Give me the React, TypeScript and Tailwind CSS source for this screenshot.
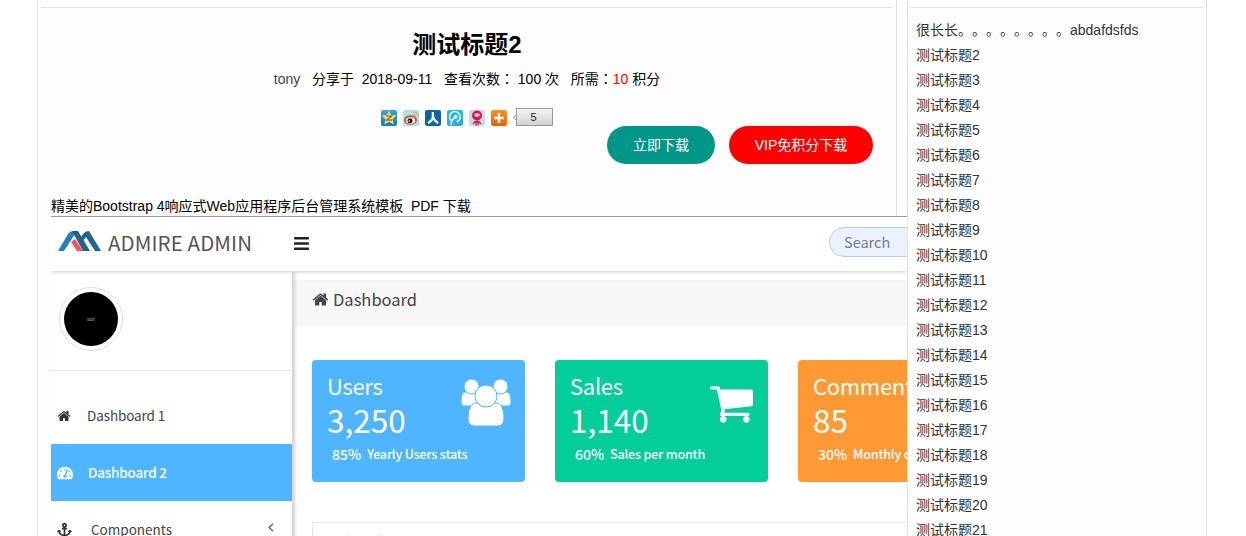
import clsx from "clsx";
import React from "react";
import { FaAnchor, FaBars, FaTachometerAlt } from "react-icons/fa";

const titles = [
  "很长长。。。。。。。。abdafdsfds",
  ...Array.from({ length: 20 }, (_, i) => `测试标题${i + 2}`),
];

const stats = [
  {
    name: "Users",
    count: "3,250",
    percent: "85%",
    note: "Yearly Users stats",
    color: "bg-[#4fb5fe]",
    icon: <UsersIcon />,
  },
  {
    name: "Sales",
    count: "1,140",
    percent: "60%",
    note: "Sales per month",
    color: "bg-[#03cd98]",
    icon: <CartIcon />,
  },
  {
    name: "Comments",
    count: "85",
    percent: "30%",
    note: "Monthly comments",
    color: "bg-[#ff9933]",
    icon: null,
  },
];

function HomeIcon({ className }: { className?: string }) {
  return (
    <svg viewBox="0 0 1792 1792" fill="currentColor" className={className}>
      <path d="M1472 992v480q0 26-19 45t-45 19h-384v-384h-256v384h-384q-26 0-45-19t-19-45v-480q0-1 .5-3t.5-3l575-474 575 474q1 2 1 6zm223-69l-62 74q-8 9-21 11h-3q-13 0-21-7l-692-577-692 577q-12 8-24 7-13-2-21-11l-62-74q-8-10-7-23.5t11-21.5l719-599q32-26 76-26t76 26l244 204v-195q0-14 9-23t23-9h192q14 0 23 9t9 23v408l219 182q10 8 11 21.5t-7 23.5z" />
    </svg>
  );
}

function UsersIcon() {
  return (
    <svg
      viewBox="0 0 50 48"
      fill="#fff"
      stroke="#4fb5fe"
      className="mt-[19px] mr-[14px] h-[48px] w-[50px] shrink-0"
    >
      <path d="M4 13h10c3 0 5 3 5 6v8H4c-3 0-4-1-4-4 0-5 1-10 4-10z" />
      <path d="M36 13h10c3 0 4 5 4 10 0 3-1 4-4 4H31v-8c0-3 2-6 5-6z" />
      <circle cx="10.500" cy="7.500" r="7.500" />
      <circle cx="39.500" cy="7.500" r="7.500" />
      <path d="M15 24h20c6 0 8 8 8 15 0 6-3 8-7 8H14c-4 0-7-2-7-8 0-7 2-15 8-15z" />
      <circle cx="25" cy="17" r="11" />
    </svg>
  );
}

function CartIcon() {
  return (
    <svg
      viewBox="64 256 1664 1408"
      fill="#fff"
      className="mt-[26px] mr-[15px] h-[37px] w-[43px] shrink-0"
    >
      <path d="M704 1536q0 52-38 90t-90 38-90-38-38-90 38-90 90-38 90 38 38 90zm896 0q0 52-38 90t-90 38-90-38-38-90 38-90 90-38 90 38 38 90zm128-1088v512q0 24-16.500 42.500t-40.500 21.500l-1044 122q13 60 13 70 0 16-24 64h920q26 0 45 19t19 45-19 45-45 19h-1024q-26 0-45-19t-19-45q0-11 8-31.500t16-36 21.500-40 15.500-29.500l-177-823h-204q-26 0-45-19t-19-45 19-45 45-19h256q16 0 28.500 6.500t19.500 15.500 13 24.500 8 26 5.500 29.500 4.500 26h1201q26 0 45 19t19 45z" />
    </svg>
  );
}

function Colon() {
  return <span className="font-['Noto_Sans_CJK_JP',sans-serif] leading-none">：</span>;
}

function ShareBar() {
  return (
    <div className="flex h-[18px] items-center">
      <svg width="137" height="18" viewBox="0 0 137 18" className="shrink-0">
        <defs>
          <linearGradient id="qzone" x2="0" y2="1">
            <stop stopColor="#38a6ee" />
            <stop offset="1" stopColor="#087bd0" />
          </linearGradient>
          <linearGradient id="tencent" x2="0" y2="1">
            <stop stopColor="#20bde0" />
            <stop offset="1" stopColor="#35a9d4" />
          </linearGradient>
          <linearGradient id="more" x2="0" y2="1">
            <stop stopColor="#ff9124" />
            <stop offset="1" stopColor="#f95b00" />
          </linearGradient>
        </defs>
        {/* qzone */}
        <rect y="2" width="16" height="16" rx="2" fill="url(#qzone)" />
        <path d="M8 2.500l2 4.500 5.500 .6-4 3.600 1.200 5.300-4.700-2.800L3.300 16.500l1.200-5.300L.5 7.600 6 7z" fill="#ffd95a" />
        <path d="M5.500 8.200h5l-4.800 4h5.300" fill="none" stroke="#9b6a12" strokeWidth="1.200" />
        {/* weibo */}
        <rect x="22" y="2" width="16" height="16" rx="2" fill="#a9e2ec" />
        <ellipse cx="29.500" cy="12" rx="6.500" ry="4.800" fill="#e6472c" />
        <ellipse cx="29.500" cy="12.500" rx="4.600" ry="3.200" fill="#fff" />
        <circle cx="29" cy="12.700" r="2.500" fill="#1c1c1c" />
        <circle cx="28.300" cy="13" r=".8" fill="#fff" />
        <path d="M31.500 7q3-.6 3 2.200M32 4.300q5.300-.8 5 4.700" fill="none" stroke="#e9b63c" strokeWidth="1.300" />
        {/* renren */}
        <rect x="44" y="2" width="16" height="16" rx="2" fill="#0e63a6" />
        <path d="M51.800 4v4.500q0 4-4.800 6.500M52.200 8.500q.5 4 5 6.500" fill="none" stroke="#fff" strokeWidth="2.200" />
        {/* tencent weibo */}
        <rect x="66" y="2" width="16" height="16" rx="2" fill="url(#tencent)" />
        <path d="M71.300 13.500a5.300 5.300 0 1 1 4.500.3M74.700 9Q70.500 11 70 17" fill="none" stroke="#e4f8fd" strokeWidth="1.500" />
        <circle cx="74.700" cy="8.700" r="1.800" fill="#fff" />
        {/* netease */}
        <rect x="88" y="2" width="16" height="16" rx="2" fill="#c7dceb" />
        <circle cx="96" cy="7.500" r="5" fill="#df1748" />
        <path d="M93 6.500q3-2.500 6 0-.5 2.500-3 2.500t-3-2.500z" fill="#f8d2dc" />
        <path d="M96 12v3M92 16l2-2.300h4l2 2.300M95 13.500v4M97 13.500v4" fill="none" stroke="#df1748" strokeWidth="1.300" />
        {/* more */}
        <rect x="110" y="2" width="16" height="16" rx="2" fill="url(#more)" />
        <path d="M118 5v10M113 10h10" stroke="#fff" strokeWidth="2.400" />
        {/* counter arrow */}
        <path d="M137 5l-4.300 4.500L137 14" fill="#eee" stroke="#999" />
      </svg>
      <span className="-ml-[2px] h-[18px] w-[37px] border border-[#999] bg-linear-to-b from-[#f5f5f5] to-[#d2d2d2] pr-[2px] text-center text-[11px] leading-4 text-[#222]">
        5
      </span>
    </div>
  );
}

function Sidebar() {
  return (
    <aside className="z-10 h-[280px] w-[241px] shrink-0 bg-white text-[13.5px] text-[#444] shadow-[3px_0_3px_#d4d4d4]">
      <div className="h-[100px] border-b border-[#e5e5e5] pt-[16px] pl-[8px]">
        <div className="flex size-[64px] items-center justify-center rounded-full border border-[#ddd]">
          <div className="flex size-[54px] items-center justify-center rounded-full bg-black text-[4px] text-[#bbb]">
            Bob
          </div>
        </div>
      </div>
      <div className="mt-[16px] flex h-[57px] items-center pl-[6px]">
        <HomeIcon className="mr-[16px] size-[14px] text-[#333]" />
        <span className="tracking-[-0.1px]">Dashboard 1</span>
      </div>
      <div className="flex h-[57px] items-center bg-[#4fb5fe] pl-[6px] font-medium text-white">
        <FaTachometerAlt className="mr-[15px] size-[16px]" />
        <span className="tracking-[-0.2px]">Dashboard 2</span>
      </div>
      <div className="flex h-[57px] items-center pl-[6px]">
        <FaAnchor className="mr-[19px] size-[15px] text-[#333]" />
        Components
        <svg viewBox="0 0 6 9" className="mt-[-5px] mr-[18px] ml-auto h-[9px] w-[6px]">
          <path d="M5 .8L1.200 4.500 5 8.200" fill="none" stroke="#666" strokeWidth="1.400" />
        </svg>
      </div>
    </aside>
  );
}

function Preview() {
  return (
    <div className="h-[330px] w-[856px] overflow-hidden border-t border-[#9b9b9b] bg-white font-['Noto_Sans_CJK_SC',sans-serif]">
      <div className="relative z-20 flex h-[54px] items-center bg-white shadow-[0_1px_4px_#ccc]">
        <svg viewBox="0 0 43 20" className="mt-[-6px] ml-[7px] h-[20px] w-[43px] shrink-0">
          <path d="M0 20L10 3q2-3 6-3h3L6 20z" fill="#2083b8" />
          <path d="M14 0h6l12 20h-7z" fill="#285f8c" />
          <path d="M13 11l4-3 8 12h-6z" fill="#f35656" />
          <path d="M22 7l4-5q2-2 5-2l12 20h-6L28 6l-4 5z" fill="#1d6594" />
        </svg>
        <span className="mt-[-4px] ml-[7px] w-[146px] shrink-0 text-[20.5px] tracking-[0.1px] whitespace-nowrap text-[#555]">
          ADMIRE ADMIN
        </span>
        <FaBars className="mt-[-2px] ml-[39px] size-[17px] shrink-0 text-[#222]" />
        <div className="mt-[-4px] ml-[519px] flex h-[30px] w-[160px] shrink-0 items-center rounded-full border border-[#b4cfe2] bg-[#e9f2fe] pl-[14px] text-[14.5px] text-[#777f89]">
          Search
        </div>
      </div>
      <div className="flex">
        <Sidebar />
        <main className="w-[615px] shrink-0 pt-[9px]">
          <div className="flex h-[45px] items-center border-y border-[#f3f3f3] bg-[#f7f7f7] pb-[6px] pl-[20px] text-[16.5px] text-[#444]">
            <HomeIcon className="mr-[4px] size-[17px]" />
            Dashboard
          </div>
          <div className="mt-[35px] flex gap-[30px] pl-[20px]">
            {stats.map((stat) => (
              <div
                key={stat.name}
                className={clsx(
                  "flex h-[122px] w-[213px] shrink-0 justify-between rounded text-white",
                  stat.color,
                )}
              >
                <div className="min-w-0 pl-[15px] whitespace-nowrap">
                  <p className="mt-[11px] text-[22px] leading-[28px] tracking-[-0.3px]">
                    {stat.name}
                  </p>
                  <p className="text-[31.5px] leading-[40px]">{stat.count}</p>
                  <p className="mt-[5px] flex items-center pl-[5px] leading-[20px] font-medium">
                    <span className="w-[35px] shrink-0 text-[14px]">{stat.percent}</span>
                    <span className="text-[12.5px] tracking-[-0.15px]">{stat.note}</span>
                  </p>
                </div>
                {stat.icon}
              </div>
            ))}
          </div>
          <div className="mt-[40px] ml-[20px] h-[40px] w-[640px] border border-[#e4e4e4] pt-[8px] pl-[17px] text-[14px] leading-[20px] text-[#666]">
            Sales Chart
          </div>
        </main>
      </div>
    </div>
  );
}

export default function App() {
  return (
    <div className="flex h-[536px] w-[1246px] overflow-hidden bg-white pl-[37px] font-['Liberation_Sans','Noto_Sans_CJK_SC',sans-serif] text-[14px] text-black [text-spacing-trim:space-all]">
      <section className="h-[560px] w-[860px] shrink-0 border-x border-[#e2e2e2] bg-[#fdfdfd]">
        <div className="mx-[3px] h-[8px] border-b border-[#e2e2e2]" />
        <div className="flex flex-col items-center">
          <h1 className="mt-[19px] text-[24px] leading-[36px] font-bold">测试标题2</h1>
          <p className="mt-[6px] h-[20px] leading-[20px] whitespace-pre">
            <span className="text-[#444]">tony</span>
            {"   分享于  2018-09-11   查看次数"}
            <Colon />
            {" 100 次   所需"}
            <Colon />
            <span className="text-[#ff0000]">10</span>
            {" 积分"}
          </p>
          <div className="mt-[19px]">
            <ShareBar />
          </div>
        </div>
        <div className="flex justify-end gap-[14px] pr-[23px] text-white">
          <button className="h-[38px] w-[108px] rounded-full bg-[#009688]">立即下载</button>
          <button className="h-[38px] w-[144px] rounded-full bg-[#ff0000]">VIP免积分下载</button>
        </div>
        <div className="mt-[32px] ml-[13px]">
          <p className="h-[20px] leading-[20px] whitespace-pre">
            精美的Bootstrap 4响应式Web应用程序后台管理系统模板  PDF 下载
          </p>
          <Preview />
        </div>
      </section>
      <aside className="z-30 ml-[10px] h-[560px] w-[300px] shrink-0 border-x border-[#e2e2e2] bg-[#fdfdfd]">
        <div className="mx-[3px] h-[8px] border-b border-[#e2e2e2]" />
        <ul className="mt-[10px] pl-[8px] leading-[25px] text-[#333]">
          {titles.map((title) => (
            <li key={title} className="h-[25px]">
              {title}
            </li>
          ))}
        </ul>
      </aside>
    </div>
  );
}
